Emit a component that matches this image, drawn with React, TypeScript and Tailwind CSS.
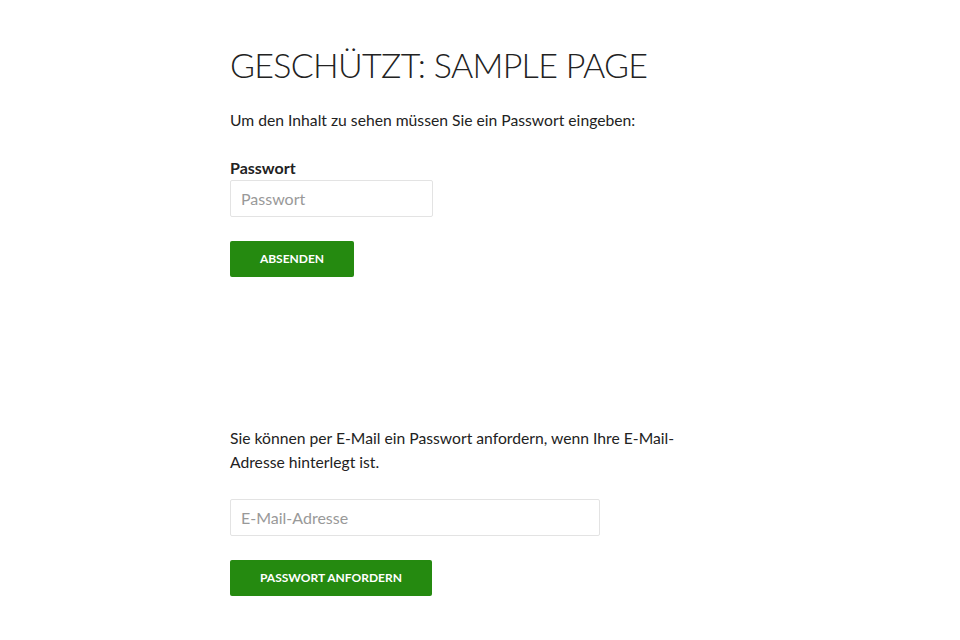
import React from "react";

export default function App() {
  return (
    <div className="min-h-[640px] w-[960px] bg-white font-['Lato','Noto_Sans',sans-serif] text-[#222]">
      <div className="ml-[230px] w-[470px] pt-[43px]">
        <h1 className="text-[34px] leading-[44px] font-light tracking-[-0.7px] text-[#222]">
          GESCHÜTZT: SAMPLE PAGE
        </h1>
        <p className="mt-[21px] text-[15.7px] leading-[24px]">
          Um den Inhalt zu sehen müssen Sie ein Passwort eingeben:
        </p>

        <form className="mt-[24px]" onSubmit={(e) => e.preventDefault()}>
          <label className="block text-[16px] leading-[24px] font-bold">Passwort</label>
          <input
            type="password"
            placeholder="Passwort"
            className="block h-[37px] w-[203px] rounded-[2px] border border-[#e3e3e3] px-[10px] text-[16px] placeholder:text-[#999] outline-none"
          />
          <button className="mt-[24px] h-[36px] w-[124px] rounded-[2px] bg-[#258a10] text-[12px] font-bold uppercase text-white">
            Absenden
          </button>
        </form>

        <p className="mt-[149px] text-[15.7px] leading-[24px]">
          Sie können per E-Mail ein Passwort anfordern, wenn Ihre E-Mail-Adresse hinterlegt ist.
        </p>

        <form className="mt-[25px]" onSubmit={(e) => e.preventDefault()}>
          <input
            type="email"
            placeholder="E-Mail-Adresse"
            className="block h-[37px] w-[370px] rounded-[2px] border border-[#e3e3e3] px-[10px] text-[16px] placeholder:text-[#999] outline-none"
          />
          <button className="mt-[24px] h-[36px] w-[202px] rounded-[2px] bg-[#258a10] text-[12px] font-bold uppercase text-white">
            Passwort anfordern
          </button>
        </form>
      </div>
    </div>
  );
}
